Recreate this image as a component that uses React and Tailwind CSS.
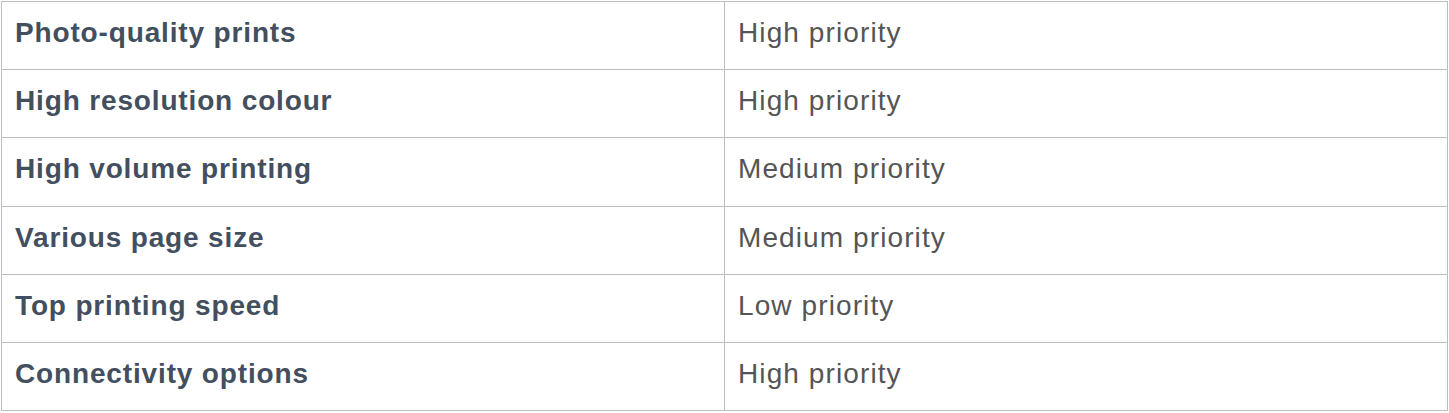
import React from "react";

const rows = [
  ["Photo-quality prints", "High priority"],
  ["High resolution colour", "High priority"],
  ["High volume printing", "Medium priority"],
  ["Various page size", "Medium priority"],
  ["Top printing speed", "Low priority"],
  ["Connectivity options", "High priority"],
];

export default function App() {
  return (
    <div className="bg-white pt-px pl-px w-[1449px] h-[413px] font-['Liberation_Sans',Arial,sans-serif]">
      <table className="w-[1447px] border-collapse table-fixed">
        <tbody>
          {rows.map(([feature, priority]) => (
            <tr key={feature} className="h-[68.2px]">
              <td className="w-[723px] border border-[#bdbdbd] pl-[13px] pb-[5px] text-[28px] leading-none font-bold text-[#434f5e] tracking-[0.85px]">
                {feature}
              </td>
              <td className="border border-[#bdbdbd] pl-[13px] pb-[5px] text-[28px] leading-none text-[#555555] tracking-[1.1px]">
                {priority}
              </td>
            </tr>
          ))}
        </tbody>
      </table>
    </div>
  );
}
